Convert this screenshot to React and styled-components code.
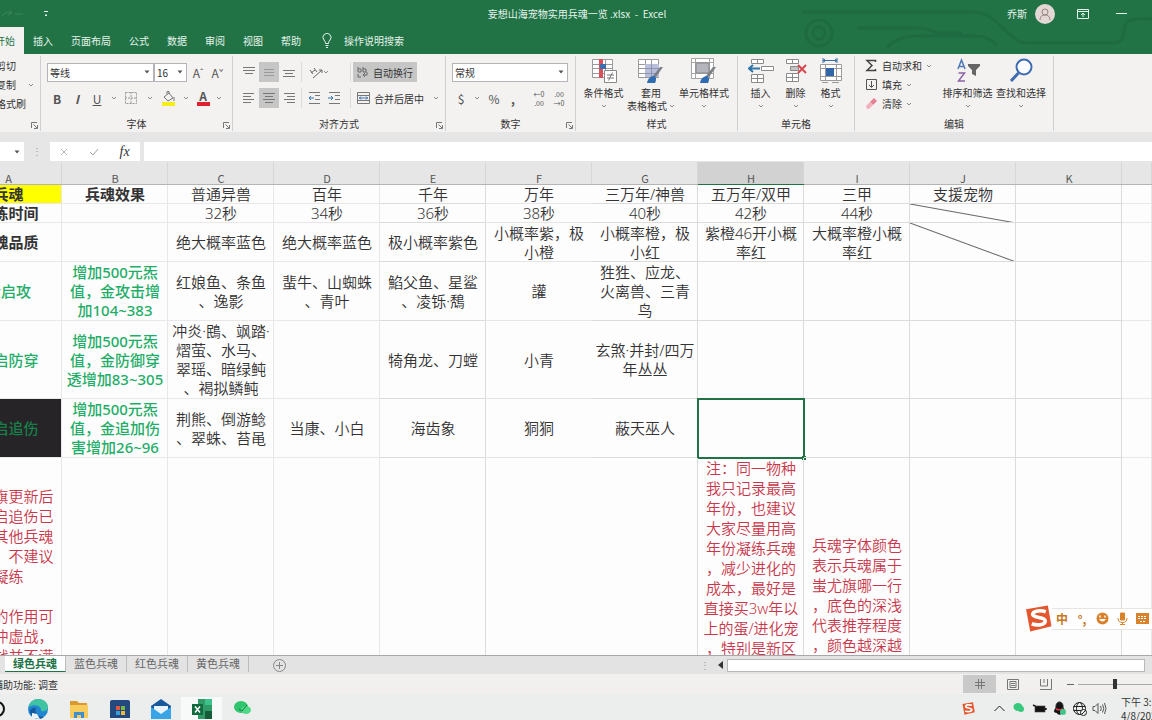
import React, { useState } from "react";
import styled, { createGlobalStyle, css } from "styled-components";

const COLUMNS = ["A", "B", "C", "D", "E", "F", "G", "H", "I", "J", "K", "L"];
const TABS = ["开始", "插入", "页面布局", "公式", "数据", "审阅", "视图", "帮助"];
const SHEETS = ["绿色兵魂", "蓝色兵魂", "红色兵魂", "黄色兵魂"];

// each cell is a list of lines, or an object with lines and a look
const ROWS = [
  {
    height: 19,
    cells: {
      A: { lines: ["兵魂"], bold: true, fill: "#ffff00" },
      B: { lines: ["兵魂效果"], bold: true },
      C: ["普通异兽"],
      D: ["百年"],
      E: ["千年"],
      F: ["万年"],
      G: ["三万年/神兽"],
      H: ["五万年/双甲"],
      I: ["三甲"],
      J: ["支援宠物"],
    },
  },
  {
    height: 19,
    cells: {
      A: { lines: ["凝练时间"], bold: true },
      C: ["32秒"],
      D: ["34秒"],
      E: ["36秒"],
      F: ["38秒"],
      G: ["40秒"],
      H: ["42秒"],
      I: ["44秒"],
      J: { lines: [], slash: true },
    },
  },
  {
    height: 39,
    cells: {
      A: { lines: ["兵魂品质"], bold: true },
      C: ["绝大概率蓝色"],
      D: ["绝大概率蓝色"],
      E: ["极小概率紫色"],
      F: ["小概率紫，极", "小橙"],
      G: ["小概率橙，极", "小红"],
      H: ["紫橙46开小概", "率红"],
      I: ["大概率橙小概", "率红"],
      J: { lines: [], slash: true },
    },
  },
  {
    height: 59,
    cells: {
      A: { lines: ["金启攻"], color: "#1fae68", medium: true },
      B: { lines: ["增加500元炁", "值，金攻击增", "加104~383"], color: "#1fae68", medium: true },
      C: ["红娘鱼、条鱼", "、逸影"],
      D: ["蜚牛、山蜘蛛", "、青叶"],
      E: ["䱤父鱼、星鲨", "、凌铄·鵚"],
      F: ["讙"],
      G: ["狌狌、应龙、", "火离兽、三青", "鸟"],
    },
  },
  {
    height: 78,
    cells: {
      A: { lines: ["金启防穿"], color: "#1fae68", medium: true },
      B: { lines: ["增加500元炁", "值，金防御穿", "透增加83~305"], color: "#1fae68", medium: true },
      C: ["冲炎·鴖、飒踏·", "熠萤、水马、", "翠瑶、暗绿鲀", "、褐拟鳞鲀"],
      E: ["犄角龙、刀螳"],
      F: ["小青"],
      G: ["玄煞·并封/四万", "年丛丛"],
    },
  },
  {
    height: 59,
    cells: {
      A: { lines: ["金启追伤"], color: "#17804a", medium: true, fill: "#262427" },
      B: { lines: ["增加500元炁", "值，金追加伤", "害增加26~96"], color: "#1fae68", medium: true },
      C: ["荆熊、倒游鲶", "、翠蛛、苔黾"],
      D: ["当康、小白"],
      E: ["海齿象"],
      F: ["狪狪"],
      G: ["蔽天巫人"],
      H: { lines: [], selected: true },
    },
  },
  {
    height: 420,
    cells: {
      A: {
        note: 28,
        lines: ["蚩尤旗更新后", "，金启追伤已", "不如其他兵魂", "强了，不建议", "凝练", "\u00a0", "兵魂的作用可", "用于冲虚战，", "但实战并不满"],
      },
      H: {
        note: 0,
        lines: ["注：同一物种", "我只记录最高", "年份，也建议", "大家尽量用高", "年份凝练兵魂", "，减少进化的", "成本，最好是", "直接买3w年以", "上的蛋/进化宠", "，特别是新区"],
      },
      I: {
        note: 77,
        lines: ["兵魂字体颜色", "表示兵魂属于", "蚩尤旗哪一行", "，底色的深浅", "代表推荐程度", "，颜色越深越"],
      },
    },
  },
];

const Caret = ({ solid }) => (
  <svg width="6" height="4" viewBox="0 0 6 4" aria-hidden="true">
    {solid ? <path d="M0.5 0.5h5L3 3.5z" fill="#555" /> : <path d="M1 1l2 2 2-2" fill="none" stroke="#8a8a8a" />}
  </svg>
);

const LinesIcon = ({ at, color = "#777" }) => (
  <svg width="14" height="12" viewBox="0 0 14 12" aria-hidden="true">
    {at.map(([x, y, w]) => (
      <path key={y} d={`M${x} ${y}.5h${w}`} stroke={color} />
    ))}
  </svg>
);

const LauncherIcon = () => (
  <svg width="7" height="7" viewBox="0 0 7 7" fill="none" stroke="#777" aria-hidden="true">
    <path d="M0.5 6V0.5H6M2.5 2.5L6 6M6.5 3v3.5H3" />
  </svg>
);

const BrushShape = () => (
  <>
    <path d="M26 9l-7 10-3-1 7-9z" fill="#7c7f86" />
    <path d="M10 25c1-5 4-7 7-7 3 1 2 5 1 7z" fill="#2f6bb0" />
  </>
);

const GridShape = () => (
  <path d="M1.5 1.5h20v18h-20zM1.5 6.5h20M1.5 10.5h20M1.5 15.5h20M8.5 1.5v18M14.5 1.5v18" fill="#fff" stroke="#9a9a9a" />
);

const ConditionalIcon = () => (
  <svg width="26" height="26" viewBox="0 0 26 26" aria-hidden="true">
    <GridShape />
    <path d="M8 1h4v19H8z" fill="#d9505c" />
    <path d="M9 6h6v5H9z" fill="#3c6fb2" />
    <path d="M13.5 12.5h12v12h-12z" fill="#fff" stroke="#888" />
    <path d="M16 17h7M16 20h7M21.5 14.5l-4 8" stroke="#777" />
  </svg>
);

const TableFormatIcon = () => (
  <svg width="28" height="26" viewBox="0 0 28 26" aria-hidden="true">
    <GridShape />
    <path d="M8 6h14v13H8z" fill="#b9bfd8" />
    <path d="M8 10.5h14M8 15.5h14M14.5 6v13" stroke="#8c93b3" />
    <BrushShape />
  </svg>
);

const CellStyleIcon = () => (
  <svg width="28" height="26" viewBox="0 0 28 26" aria-hidden="true">
    <path d="M1.5 0.5h22v20h-22zM1.5 4.5h22M1.5 15.5h22M5.5 0.5v20M19.5 0.5v20" fill="#fff" stroke="#a5a5a5" />
    <path d="M6 5h13v10H6z" fill="#b5b5bd" stroke="#888" />
    <BrushShape />
  </svg>
);

const InsertIcon = () => (
  <svg width="26" height="26" viewBox="0 0 26 26" fill="#fff" stroke="#8a8a8a" aria-hidden="true">
    <path d="M3.5 1.5h12v4h-12zM9.5 1.5v4M3.5 16.5h12v8h-12zM9.5 16.5v8M3.5 20.5h12M13.5 8.5h12v4h-12z" />
    <path d="M1 10.5h11M5 7l-4 3.5 4 3.5" fill="none" stroke="#2f75a8" strokeWidth="2" />
  </svg>
);

const DeleteIcon = () => (
  <svg width="26" height="26" viewBox="0 0 26 26" fill="#fff" stroke="#8a8a8a" aria-hidden="true">
    <path d="M3.5 1.5h12v4h-12zM9.5 1.5v4M3.5 15.5h12v8h-12zM9.5 15.5v8M3.5 19.5h12" />
    <path d="M7.5 8.5h8v4h-8z" fill="#c4c4c4" />
    <path d="M15 7l8 8M23 7l-8 8" stroke="#d8454c" strokeWidth="2" />
  </svg>
);

const FormatIcon = () => (
  <svg width="26" height="26" viewBox="0 0 26 26" fill="#fff" stroke="#9a9a9a" aria-hidden="true">
    <path d="M2.5 6.5h21v16h-21zM2.5 10.5h21M2.5 18.5h21M7.5 6.5v16M18.5 6.5v16" />
    <path d="M8 10h8v8H8z" fill="#2f66a8" stroke="none" />
    <path d="M5 2.5h14M5 0v5M19 0v5M7 1L5 2.5 7 4M17 1l2 1.5L17 4" fill="none" stroke="#3b6ea5" />
    <path d="M4 24.5h6M14 24.5h7" />
  </svg>
);

const SortIcon = () => (
  <svg width="26" height="26" viewBox="0 0 26 26" fill="none" aria-hidden="true">
    <path d="M3 11L6.5 2 10 11M4 8.5h5" stroke="#4d7ab8" strokeWidth="1.5" />
    <path d="M3.5 15h6l-6 8h6.5" stroke="#8a63a8" strokeWidth="1.5" />
    <path d="M13 6h12v2l-4 4v6l-4-2v-4l-4-4z" fill="#666" />
  </svg>
);

const FindIcon = () => (
  <svg width="26" height="26" viewBox="0 0 26 26" fill="none" stroke="#3f6cb0" aria-hidden="true">
    <circle cx="16" cy="9" r="7.5" strokeWidth="2" fill="#fbfcff" />
    <path d="M10.5 15L3 23" strokeWidth="3" />
  </svg>
);

const ListIcon = ({ kind }) => (
  <svg width="13" height="13" viewBox="0 0 13 13" fill="none" aria-hidden="true">
    {kind === "cut" && <path d="M3 1l6 8M10 1L4 9M2 11a2 2 0 1 0 2-2M11 11a2 2 0 1 1-2-2" stroke="#555" />}
    {kind === "copy" && <path d="M1.5 1.5h6v8h-6zM4.5 3.5h6v8h-6z" fill="#fff" stroke="#555" />}
    {kind === "painter" && <path d="M2 9l5-6 4 3-5 6z" fill="#e2a85a" />}
    {kind === "sum" && <path d="M10.500 3V1.5H2L7 6.5 2 11.5h8.500V10" stroke="#444" strokeWidth="1.5" />}
    {kind === "fill" && <path d="M1.5 1.5h10v10h-10zM6.5 3v6M4 7l2.5 2.5L9 7" stroke="#555" />}
    {kind === "clear" && (
      <>
        <path d="M5 5l4-4 3 3-4 4z" fill="#e77f92" />
        <path d="M1 9l4-4 3 3-4 4H2z" fill="#f3b0bd" />
      </>
    )}
  </svg>
);

const SogouLogo = ({ size }) => (
  <svg width={size} height={size} viewBox="0 0 26 26" aria-label="搜狗">
    <path d="M1 4L22 0.5l3.5 20L5 25.5z" fill="#e4572e" />
    <path d="M20 6.5C14 4.5 6.5 6 7.5 9.5c1 3.5 12 1.5 12 6 0 4-8 4.5-13 2.5" fill="none" stroke="#fff" strokeWidth="3.5" />
  </svg>
);

const AppIcon = ({ kind }) => (
  <svg width="22" height="22" viewBox="0 0 22 22" aria-hidden="true">
    {kind === "edge" && (
      <>
        <circle cx="11" cy="11" r="10" fill="#1f86cf" />
        <path d="M1.5 9C3 3 8 1 12 1c5 0 9 4 9 8 0 3-3 5-7 4 1-5-6-8-12.5-4z" fill="#3fc3a0" />
        <path d="M9 10c-2 5 2 9 8 9-5 4-13 1-14-5 0-3 3-5 6-4z" fill="#155a9c" />
        <path d="M5 15l5 1 3 5-8-1z" fill="#eef3f7" />
      </>
    )}
    {kind === "folder" && (
      <>
        <path d="M2 3h7l2 2h8v4H2z" fill="#d99a2b" />
        <path d="M2 7h18v13H2z" fill="#f7cb5c" />
        <path d="M6 20v-6h10v6h-3v-3H9v3z" fill="#3f8fd0" />
      </>
    )}
    {kind === "store" && (
      <>
        <path d="M1 4q0-2 2-2h16q2 0 2 2v16H1z" fill="#24497e" />
        <path d="M7 8h4v4H7z" fill="#e5533d" />
        <path d="M12 8h4v4h-4z" fill="#77b943" />
        <path d="M7 13h4v4H7z" fill="#35a0dc" />
        <path d="M12 13h4v4h-4z" fill="#f5b82e" />
      </>
    )}
    {kind === "mail" && (
      <>
        <path d="M1 8l10-7 10 7v13H1z" fill="#17599c" />
        <path d="M4 8h14v8H4z" fill="#eaf4fc" />
        <path d="M1 9l10 7 10-7v12H1z" fill="#39a4e6" />
      </>
    )}
    {kind === "excel" && (
      <>
        <path d="M7 1h14v20H7z" fill="#2f9b66" />
        <path d="M14 1h7v6h-7z" fill="#3cc28a" />
        <path d="M14 13h7v8h-7z" fill="#155c39" />
        <path d="M1 6h11v11H1z" fill="#116b3e" />
        <path d="M4 8.5l5 6M9 8.5l-5 6" stroke="#fff" strokeWidth="1.5" />
      </>
    )}
    {kind === "wechat" && (
      <>
        <ellipse cx="9" cy="9" rx="7" ry="6" fill="#2fc56c" />
        <ellipse cx="14" cy="12" rx="5" ry="4" fill="#4fd987" />
        <path d="M7 11l3 2 5-6" stroke="#187a42" fill="none" />
      </>
    )}
  </svg>
);

const TrayIcon = ({ kind }) => (
  <svg width="15" height="15" viewBox="0 0 15 15" fill="none" stroke="#222" aria-hidden="true">
    {kind === "up" && <path d="M2.5 10l5-5 5 5" />}
    {kind === "wechat" && (
      <g stroke="none" fill="#36c97c">
        <ellipse cx="6" cy="6" rx="4.5" ry="4" />
        <ellipse cx="9" cy="8" rx="3" ry="3" />
      </g>
    )}
    {kind === "battery" && <path d="M1 4l3 1.5M3.5 5.5h9v5h-9zM14 7v2" fill="#111" strokeWidth="1.5" />}
    {kind === "qq" && (
      <>
        <path d="M4 7c-1-8 8-8 7 0 3 4 1 5 0 4-2 3-5 3-7 0-1 1-3 0 0-4z" fill="#151515" />
        <path d="M4 7q3.5 2 7 0v2q-3.5 1-7 0z" fill="#d93545" stroke="none" />
        <circle cx="11" cy="11" r="3" fill="#42c98a" stroke="none" />
      </>
    )}
    {kind === "globe" && (
      <>
        <circle cx="7.5" cy="7.5" r="6" />
        <ellipse cx="7.5" cy="7.5" rx="3" ry="6" />
        <path d="M1.5 5.5h12M1.5 9.5h12" />
        <circle cx="11.5" cy="11.5" r="3" fill="#eee" />
        <path d="M9.5 13.5l4-4" />
      </>
    )}
    {kind === "volume" && <path d="M1 5.5h2l3-3v10l-3-3H1zM8.5 5q1.5 2.5 0 5M10.5 3.5q2.5 4 0 8M12.5 2q3 5.5 0 11" stroke="#555" />}
  </svg>
);

function SheetCell({ data, column }) {
  const cell = Array.isArray(data) ? { lines: data } : data || { lines: [] };
  return (
    <Cell
      $strong={"EGHIJK".includes(column)}
      $plain={column === "F"}
      $bold={cell.bold}
      $medium={cell.medium}
      $color={cell.color}
      $fill={cell.fill}
      $slash={cell.slash}
      $selected={cell.selected}
      $note={cell.note}
    >
      {cell.lines.map((line, i) => (
        <div key={i}>{line}</div>
      ))}
    </Cell>
  );
}

function RibbonButton({ icon, label, width }) {
  return (
    <BigButton $width={width}>
      {icon}
      <span>{label}</span>
      <Caret />
    </BigButton>
  );
}

function TitleBar() {
  return (
    <TitleRow>
      <QuickAccess>
        <svg width="24" height="12" viewBox="0 0 24 12" fill="none" stroke="#3c8560" aria-hidden="true">
          <path d="M1 8q4-5 9-3M8 2l3 3-4 2M14 6h8" />
        </svg>
        <svg width="6" height="8" viewBox="0 0 6 8" aria-hidden="true">
          <path d="M1 1.5h4M2 5h2L3 6z" fill="#e4f3ea" stroke="#e4f3ea" />
        </svg>
      </QuickAccess>
      <Title>妄想山海宠物实用兵魂一览 .xlsx&nbsp; -&nbsp; Excel</Title>
      <Account>
        <span>乔斯</span>
        <Avatar aria-label="账户">
          <svg width="14" height="14" viewBox="0 0 14 14" fill="none" stroke="#9a8583" aria-hidden="true">
            <circle cx="7" cy="5" r="3" />
            <path d="M2 13q0-5 5-5t5 5" />
          </svg>
        </Avatar>
        <WindowButton aria-label="功能区显示选项">
          <svg width="12" height="10" viewBox="0 0 12 10" fill="none" stroke="#e6f3ec">
            <path d="M0.5 0.5h11v9H0.5zM0.5 2.5h11M6 8V4M4 6l2-2 2 2" />
          </svg>
        </WindowButton>
        <WindowButton aria-label="最小化">
          <svg width="11" height="10" viewBox="0 0 11 10" stroke="#e6f3ec">
            <path d="M0 4.5h11" />
          </svg>
        </WindowButton>
      </Account>
    </TitleRow>
  );
}

function FontGroup() {
  return (
    <Group $width={192}>
      <Tools>
        <Row>
          <Field $width={107}>
            <select aria-label="字体" defaultValue="等线"><option>等线</option></select>
            <Caret solid />
          </Field>
          <Field $width={33}>
            <select aria-label="字号" defaultValue="16"><option>16</option></select>
            <Caret solid />
          </Field>
          <Tool $width={22} aria-label="增大字号">A<sup>ˆ</sup></Tool>
          <Tool $width={17} aria-label="减小字号">A<sup>ˇ</sup></Tool>
        </Row>
        <Row>
          <Tool $width={20} aria-label="加粗"><b>B</b></Tool>
          <Tool $width={20} aria-label="倾斜"><b><i>I</i></b></Tool>
          <Tool $width={20} aria-label="下划线"><u>U</u></Tool>
          <Tool $width={14} aria-label="下划线选项"><Caret /></Tool>
          <Tool $width={20} aria-label="边框">
            <svg width="12" height="12" viewBox="0 0 12 12" fill="none" stroke="#999"><path d="M0.5 0.5h11v11H0.5zM6 0v12M0 6h12" strokeDasharray="2 1" /></svg>
          </Tool>
          <Tool $width={18} aria-label="边框选项"><Caret /></Tool>
          <Tool $width={20} aria-label="填充颜色">
            <svg width="14" height="15" viewBox="0 0 14 15" fill="none"><path d="M2 6l5-4 4 5-5 3zM5 3V0.5h2V3M12 6v4" stroke="#777" /><path d="M0 11h13v4H0z" fill="#f8ee17" /></svg>
          </Tool>
          <Tool $width={14} aria-label="填充颜色选项"><Caret /></Tool>
          <Tool $width={20} aria-label="字体颜色">
            <FontColour>A</FontColour>
          </Tool>
          <Tool $width={12} aria-label="字体颜色选项"><Caret /></Tool>
        </Row>
      </Tools>
      <GroupLabel>字体<LauncherIcon /></GroupLabel>
    </Group>
  );
}

function AlignmentGroup() {
  return (
    <Group $width={213}>
      <Tools>
        <Row>
          <Tool $width={20} aria-label="顶端对齐"><LinesIcon at={[[1, 1, 12], [1, 4, 12], [3, 7, 8]]} /></Tool>
          <Tool $width={20} $on aria-label="垂直居中"><LinesIcon at={[[2, 3, 10], [2, 6, 10], [2, 9, 10]]} color="#999" /></Tool>
          <Tool $width={20} aria-label="底端对齐"><LinesIcon at={[[1, 4, 12], [3, 7, 8], [1, 10, 12]]} /></Tool>
          <Divider />
          <Tool $width={30} aria-label="方向">
            <svg width="14" height="13" viewBox="0 0 14 13" fill="none" stroke="#666"><path d="M4 12l9-8M10 4h3v3M1 4l3 4M5 2l3 4M2 7l4-3" /></svg>
            <Caret />
          </Tool>
          <Spacer />
          <Divider />
          <LabelSlot>
            <LabelButton $on>
              <svg width="12" height="12" viewBox="0 0 12 12" fill="none" stroke="#666" aria-hidden="true"><path d="M1 1v5h3V3H1M6 1v5h3V3H6M1 8v3h3M10 6v3H6l2-2M6 9l2 2" /></svg>
              自动换行
            </LabelButton>
          </LabelSlot>
        </Row>
        <Row>
          <Tool $width={20} aria-label="左对齐"><LinesIcon at={[[1, 1, 11], [1, 4, 8], [1, 7, 11], [1, 10, 8]]} /></Tool>
          <Tool $width={20} $on aria-label="居中"><LinesIcon at={[[1, 1, 12], [3, 4, 8], [1, 7, 12], [3, 10, 8]]} /></Tool>
          <Tool $width={20} aria-label="右对齐"><LinesIcon at={[[2, 1, 11], [5, 4, 8], [2, 7, 11], [5, 10, 8]]} /></Tool>
          <Divider />
          <Tool $width={20} aria-label="减少缩进量">
            <svg width="12" height="12" viewBox="0 0 12 12" fill="none" stroke="#777"><path d="M1 0.5h11M7 3.5h5M7 7.5h5M1 11.5h11" /><path d="M6 6H1M3 4L1 6l2 2" stroke="#2e77b0" /></svg>
          </Tool>
          <Tool $width={20} aria-label="增加缩进量">
            <svg width="12" height="12" viewBox="0 0 12 12" fill="none" stroke="#777"><path d="M1 0.5h11M7 3.5h5M7 7.5h5M1 11.5h11" /><path d="M0 6h5M3 4l2 2-2 2" stroke="#2e77b0" /></svg>
          </Tool>
          <Spacer />
          <Divider />
          <LabelSlot>
            <LabelButton>
              <svg width="13" height="12" viewBox="0 0 13 12" fill="none" stroke="#777" aria-hidden="true"><path d="M0.5 0.5h12v11H0.5zM0.5 3.5h12M0.5 8.5h12" /><path d="M2 6h9M4 4.5L2.5 6 4 7.5M9 4.5L10.5 6 9 7.5" stroke="#3c6db0" /></svg>
              合并后居中
            </LabelButton>
            <Caret />
          </LabelSlot>
        </Row>
      </Tools>
      <GroupLabel>对齐方式<LauncherIcon /></GroupLabel>
    </Group>
  );
}

function NumberGroup() {
  return (
    <Group $width={130}>
      <Tools>
        <Row>
          <Field $width={116}>
            <select aria-label="数字格式" defaultValue="常规"><option>常规</option></select>
            <Caret solid />
          </Field>
        </Row>
        <Row>
          <Tool $width={18} aria-label="会计数字格式">$</Tool>
          <Tool $width={14} aria-label="货币选项"><Caret /></Tool>
          <Tool $width={20} aria-label="百分比样式">%</Tool>
          <Tool $width={18} aria-label="千位分隔样式"><b>,</b></Tool>
          <Spacer />
          <Tool $width={20} aria-label="增加小数位数"><Decimals><span>←0</span><span>.00</span></Decimals></Tool>
          <Tool $width={20} aria-label="减少小数位数"><Decimals><span>.00</span><span>→0</span></Decimals></Tool>
        </Row>
      </Tools>
      <GroupLabel>数字<LauncherIcon /></GroupLabel>
    </Group>
  );
}

function StatusRow() {
  return (
    <StatusBar>
      <span>辅助功能: 调查</span>
      <Spacer />
      <ViewButton $on aria-label="普通">
        <svg width="10" height="10" viewBox="0 0 10 10" fill="none" stroke="#777"><path d="M0 3.5h10M0 6.5h10M3.5 0v10M6.5 0v10" /></svg>
      </ViewButton>
      <ViewButton aria-label="页面布局">
        <svg width="12" height="11" viewBox="0 0 12 11" fill="none" stroke="#777"><path d="M0.5 0.5h11v10H0.5zM3 2.5h6v6H3zM4 4.5h4M4 6.5h4" /></svg>
      </ViewButton>
      <ViewButton aria-label="分页预览">
        <svg width="12" height="11" viewBox="0 0 12 11" fill="none" stroke="#777"><path d="M0.5 0v7h7V0M4 0v4M11.5 0v10.5H0" /></svg>
      </ViewButton>
      <Zoom>
        <svg width="7" height="3" viewBox="0 0 7 3" stroke="#666" aria-hidden="true"><path d="M0 1.5h7" /></svg>
        <input type="range" aria-label="显示比例" min="0" max="100" defaultValue="50" />
      </Zoom>
    </StatusBar>
  );
}

function App() {
  const [tab, setTab] = useState("开始");
  const [sheet, setSheet] = useState("绿色兵魂");

  return (
    <Viewport>
      <GlobalStyle />
      <Shell>
        <Header>
          <Circuit viewBox="0 0 360 54" aria-hidden="true">
            <path d="M10 12h170q14 0 22 8l20 18q6 5 14 5h84q12 0 12-12t14-12h22" />
            <path d="M65 28h60q12 0 20 5h25M95 48q10-12 30-12h60q12 0 20 10" />
            <circle cx="27" cy="33" r="13" />
            <circle cx="27" cy="33" r="6" />
          </Circuit>
          <TitleBar />
          <Tabs>
            {TABS.map((name) => (
              <Tab key={name} $active={name === tab} onClick={() => setTab(name)}>
                {name}
              </Tab>
            ))}
            <TellMe>
              <svg width="10" height="15" viewBox="0 0 10 15" fill="none" stroke="#e6f3ec" aria-hidden="true">
                <path d="M3.5 10.5Q3.5 8.5 2 7a4 4 0 1 1 6 0Q6.5 8.5 6.5 10.5zM3.5 12.5h3M4 14.5h2" />
              </svg>
              操作说明搜索
            </TellMe>
          </Tabs>
        </Header>

        <Ribbon>
          <Group $width={86}>
            <List $left={24}>
              <ListButton><ListIcon kind="cut" />剪切</ListButton>
              <ListButton><ListIcon kind="copy" />复制<Gap /><Caret /></ListButton>
              <ListButton><ListIcon kind="painter" />格式刷</ListButton>
            </List>
            <GroupLabel><LauncherIcon /></GroupLabel>
          </Group>
          <FontGroup />
          <AlignmentGroup />
          <NumberGroup />
          <Group $width={162}>
            <BigRow>
              <RibbonButton width={45} icon={<ConditionalIcon />} label="条件格式" />
              <BigButton $width={50}>
                <TableFormatIcon />
                <span>套用</span>
                <SecondLine>表格格式<Caret /></SecondLine>
              </BigButton>
              <RibbonButton width={56} icon={<CellStyleIcon />} label="单元格样式" />
            </BigRow>
            <GroupLabel>样式</GroupLabel>
          </Group>
          <Group $width={117}>
            <BigRow>
              <RibbonButton width={35} icon={<InsertIcon />} label="插入" />
              <RibbonButton width={35} icon={<DeleteIcon />} label="删除" />
              <RibbonButton width={35} icon={<FormatIcon />} label="格式" />
            </BigRow>
            <GroupLabel>单元格</GroupLabel>
          </Group>
          <Group $width={199}>
            <Split>
              <List $left={10}>
                <ListButton><ListIcon kind="sum" />自动求和<Caret /></ListButton>
                <ListButton><ListIcon kind="fill" />填充<Caret /></ListButton>
                <ListButton><ListIcon kind="clear" />清除<Caret /></ListButton>
              </List>
              <BigRow>
                <RibbonButton width={53} icon={<SortIcon />} label="排序和筛选" />
                <RibbonButton width={54} icon={<FindIcon />} label="查找和选择" />
              </BigRow>
            </Split>
            <GroupLabel>编辑</GroupLabel>
          </Group>
        </Ribbon>

        <FormulaBar>
          <NameBox><Caret solid /></NameBox>
          <Dots>⋮</Dots>
          <FormulaTools>
            <button aria-label="取消"><svg width="8" height="8" viewBox="0 0 8 8" stroke="#b5b5b5"><path d="M1 1l6 6M7 1L1 7" /></svg></button>
            <button aria-label="输入"><svg width="10" height="8" viewBox="0 0 10 8" fill="none" stroke="#a5a5a5"><path d="M1 4l3 3 5-6" /></svg></button>
            <button aria-label="插入函数"><em>fx</em></button>
          </FormulaTools>
          <FormulaInput aria-label="编辑栏" />
        </FormulaBar>

        <SheetArea>
          <Sheet>
            <colgroup>
              {COLUMNS.map((c) => (
                <Col key={c} $name={c} />
              ))}
            </colgroup>
            <thead>
              <tr>
                {COLUMNS.map((c) => (
                  <ColumnHead key={c} scope="col" $selected={c === "H"}>{c === "L" ? "" : c}</ColumnHead>
                ))}
              </tr>
            </thead>
            <tbody>
              {ROWS.map((row, i) => (
                <SheetRow key={i} $height={row.height}>
                  {COLUMNS.map((c) => (
                    <SheetCell key={c} column={c} data={row.cells[c]} />
                  ))}
                </SheetRow>
              ))}
            </tbody>
          </Sheet>
        </SheetArea>

        <SheetBar>
          {SHEETS.map((name) => (
            <SheetTab key={name} $active={name === sheet} onClick={() => setSheet(name)}>
              {name}
            </SheetTab>
          ))}
          <AddSheet aria-label="新工作表">
            <svg width="13" height="13" viewBox="0 0 13 13" fill="none" stroke="#888"><circle cx="6.5" cy="6.5" r="6" /><path d="M6.5 3v7M3 6.5h7" /></svg>
          </AddSheet>
          <Scroll>
            <Dots>⋮</Dots>
            <svg width="5" height="8" viewBox="0 0 5 8" aria-hidden="true"><path d="M5 0v8L0 4z" fill="#333" /></svg>
            <Thumb />
          </Scroll>
        </SheetBar>

        <StatusRow />

        <Taskbar>
          <Cortana aria-label="Cortana" />
          {["edge", "folder", "store", "mail", "excel", "wechat"].map((kind) => (
            <TaskButton key={kind} aria-label={kind} $active={kind === "excel"}>
              <AppIcon kind={kind} />
            </TaskButton>
          ))}
          <Spacer />
          <Tray>
            <TrayLead><SogouLogo size={13} /></TrayLead>
            {["up", "wechat", "battery", "qq", "globe", "volume"].map((kind) => (
              <TrayIcon key={kind} kind={kind} />
            ))}
          </Tray>
          <Clock>
            下午 3:25
            <br />
            4/8/2021
          </Clock>
        </Taskbar>
      </Shell>

      <Ime>
        <SogouLogo size={27} />
        <ImeBar>
          <button>中</button>
          <button>°,</button>
          <button aria-label="表情">
            <svg width="13" height="13" viewBox="0 0 13 13">
              <circle cx="6.5" cy="6.5" r="6" fill="#d9822b" />
              <path d="M3 7q3.5 5 7 0z" fill="#fff" />
              <path d="M4 3.5v2M9 3.5v2" stroke="#fff" strokeWidth="1.5" />
            </svg>
          </button>
          <button aria-label="语音">
            <svg width="11" height="13" viewBox="0 0 11 13" fill="none" stroke="#d9822b">
              <path d="M3.5 1h4v7h-4z" fill="#d9822b" />
              <path d="M1 6q0 4.5 4.5 4.5T10 6M5.5 10v2M3 12.5h5" />
            </svg>
          </button>
          <button aria-label="软键盘">
            <svg width="13" height="11" viewBox="0 0 13 11">
              <path d="M0 0h13v11H0z" fill="#d9822b" />
              <path d="M2 3.5h9M2 5.5h9M4 8.5h5" stroke="#fff" strokeDasharray="2 1" />
            </svg>
          </button>
        </ImeBar>
      </Ime>
    </Viewport>
  );
}

export default App;

const GlobalStyle = createGlobalStyle`
  * {
    box-sizing: border-box;
  }

  body {
    margin: 0;
    font-family: "Noto Sans CJK SC", "Noto Sans", sans-serif;
    font-size: 10px;
    color: #333;
  }

  button,
  select,
  input {
    font: inherit;
    color: inherit;
  }

  button {
    display: flex;
    align-items: center;
    justify-content: center;
    padding: 0;
    border: 0;
    background: none;
    white-space: nowrap;
    cursor: pointer;
  }

  svg {
    flex: none;
  }
`;

const Viewport = styled.div`
  height: 100vh;
  overflow: hidden;
`;

// the window hangs over the left edge of the screen
const Shell = styled.div`
  display: flex;
  flex-direction: column;
  height: 100%;
  margin-left: -45px;
  background: #e6e6e6;
`;

const Header = styled.header`
  position: relative;
  background: #217346;
  color: #e6f3ec;
`;

const Circuit = styled.svg`
  position: absolute;
  top: 0;
  right: 0;
  width: 360px;
  height: 54px;
  fill: none;
  stroke: #1e6b41;
  stroke-width: 3;
`;

const TitleRow = styled.div`
  position: relative;
  display: flex;
  align-items: center;
  height: 27px;
`;

const QuickAccess = styled.div`
  display: flex;
  flex: 0 0 192px;
  align-items: center;
  gap: 18px;
  padding-left: 46px;
`;

const Title = styled.div`
  flex: 1;
  text-align: center;
`;

const Account = styled.div`
  display: flex;
  flex: 0 0 145px;
  align-items: center;
`;

const Avatar = styled.button`
  width: 20px;
  height: 20px;
  margin-left: 8px;
  border-radius: 50%;
  background: #e3d8d3;
`;

const WindowButton = styled.button`
  width: 39px;
  margin-left: 8px;

  & + & {
    margin-left: 0;
  }
`;

const Tabs = styled.nav`
  position: relative;
  display: flex;
  height: 27px;
  padding-left: 31px;
`;

const Tab = styled.button`
  padding: 0 9px;

  ${({ $active }) =>
    $active &&
    css`
      background: #f3f2f1;
      color: #217346;
    `}
`;

const TellMe = styled.button`
  gap: 12px;
  margin-left: 12px;
`;

const Ribbon = styled.div`
  display: flex;
  height: 78px;
  padding: 2px 0 1px;
  background: #f3f2f1;
`;

const Group = styled.section`
  display: flex;
  flex: 0 0 ${({ $width }) => $width}px;
  flex-direction: column;
  justify-content: space-between;
  min-width: 0;
  border-right: 1px solid #cfcfd2;
`;

const GroupLabel = styled.div`
  position: relative;
  height: 14px;
  line-height: 14px;
  text-align: center;

  svg {
    position: absolute;
    right: 2px;
    bottom: 2px;
  }
`;

const List = styled.div`
  display: flex;
  flex-direction: column;
  padding-left: ${({ $left }) => $left}px;
`;

const ListButton = styled.button`
  justify-content: flex-start;
  gap: 4px;
  height: 19px;
`;

const Gap = styled.span`
  width: 4px;
`;

const Spacer = styled.span`
  flex: 1;
`;

const Tools = styled.div`
  display: flex;
  flex-direction: column;
  gap: 6px;
  padding: 6px 6px 0;
`;

const Row = styled.div`
  display: flex;
  align-items: center;
  height: 20px;
`;

const Field = styled.label`
  display: flex;
  align-items: center;
  width: ${({ $width }) => $width}px;
  height: 19px;
  padding: 0 3px 0 2px;
  border: 1px solid #b4b4b8;
  background: #fff;

  select {
    flex: 1;
    min-width: 0;
    padding: 0;
    border: 0;
    background: none;
    appearance: none;
  }
`;

const Tool = styled.button`
  flex: none;
  width: ${({ $width }) => $width}px;
  height: 20px;
  background: ${({ $on }) => ($on ? "#c6c6c6" : "none")};
  color: #555;
  font-size: 12px;

  sup {
    font-size: 8px;
  }
`;

const FontColour = styled.span`
  width: 13px;
  border-bottom: 4px solid #e0202d;
  font-weight: 700;
  line-height: 12px;
`;

const Divider = styled.span`
  width: 1px;
  height: 20px;
  margin: 0 2px;
  background: #dcdcdc;
`;

const LabelSlot = styled.div`
  display: flex;
  flex: 0 0 86px;
  align-items: center;
  justify-content: space-between;
`;

const LabelButton = styled.button`
  gap: 4px;
  height: 20px;
  padding: 0 4px;
  background: ${({ $on }) => ($on ? "#c6c6c6" : "none")};
`;

const Decimals = styled.span`
  display: grid;
  gap: 1px;
  font-size: 7px;
  line-height: 8px;
`;

const Split = styled.div`
  display: flex;
  justify-content: space-between;
`;

const BigRow = styled.div`
  display: flex;
  padding: 2px 5px 0;
`;

const BigButton = styled.button`
  flex: 0 0 ${({ $width }) => $width}px;
  flex-direction: column;
  justify-content: flex-start;
  line-height: 13px;

  span {
    margin-top: 2px;
  }

  > svg:last-child {
    margin-top: 5px;
  }
`;

const SecondLine = styled.div`
  display: flex;
  align-items: center;
  gap: 2px;
`;

const FormulaBar = styled.div`
  display: flex;
  height: 30px;
  padding: 10px 0 1px;
`;

const NameBox = styled.div`
  display: flex;
  flex: 0 0 69px;
  align-items: center;
  justify-content: flex-end;
  padding-right: 4px;
  background: #fff;
`;

const Dots = styled.span`
  flex: 0 0 26px;
  color: #999;
  line-height: 18px;
  text-align: center;
`;

const FormulaTools = styled.div`
  display: flex;
  flex: 0 0 90px;
  justify-content: space-around;
  margin-right: 4px;
  background: #fff;

  em {
    font-family: "Liberation Serif", serif;
    font-size: 14px;
  }
`;

const FormulaInput = styled.input`
  flex: 1;
  min-width: 0;
  border: 0;
  background: #fff;
`;

const SheetArea = styled.main`
  flex: 1;
  min-height: 0;
  overflow: hidden;
  background: #fefdfe;
`;

const Sheet = styled.table`
  width: 100%;
  table-layout: fixed;
  border-spacing: 0;
  border-collapse: separate;
`;

const COLUMN_WIDTHS = { A: "107px", L: "auto" };

const Col = styled.col`
  width: ${({ $name }) => COLUMN_WIDTHS[$name] || "106px"};
`;

const ColumnHead = styled.th`
  height: 23px;
  padding: 9px 0 0;
  border-bottom: 1px solid ${({ $selected }) => ($selected ? "#217346" : "#b5b5b5")};
  background: ${({ $selected }) => ($selected ? "#d2d2d2" : "#e6e6e6")};
  box-shadow: inset -1px 0 #d6d6d6;
  color: #555;
  font-size: 11px;
  font-weight: 400;
  line-height: 12px;
`;

const SheetRow = styled.tr`
  height: ${({ $height }) => $height}px;
`;

const Cell = styled.td`
  position: relative;
  padding: 0;
  background: ${({ $fill }) => $fill || "none"};
  box-shadow: ${({ $strong, $plain }) =>
    $plain ? "inset 0 -1px #e6e6e6" : `inset -1px -1px ${$strong ? "#dcdcdc" : "#e9e7ea"}`};
  color: ${({ $color }) => $color || "#333"};
  font-family: "Noto Sans", "Noto Sans CJK SC", sans-serif;
  font-size: 15px;
  font-weight: ${({ $bold, $medium }) => ($bold ? 700 : $medium ? 500 : 350)};
  line-height: 19px;
  text-align: center;
  white-space: nowrap;

  ${({ $slash }) =>
    $slash &&
    css`
      background: linear-gradient(to top right, transparent calc(50% - 1px), #666 50%, transparent calc(50% + 1px));
    `}

  ${({ $note }) =>
    $note !== undefined &&
    css`
      padding-top: ${$note}px;
      color: #c8384a;
      line-height: 20px;
      vertical-align: top;
    `}

  ${({ $selected }) =>
    $selected &&
    css`
      outline: 2px solid #217346;
      outline-offset: -1px;

      &::after {
        content: "";
        position: absolute;
        right: -2px;
        bottom: -2px;
        width: 4px;
        height: 4px;
        background: #217346;
      }
    `}
`;

const SheetBar = styled.div`
  display: flex;
  height: 19px;
  padding-left: 50px;
  border-top: 1px solid #a8a8a8;
  background: #e3e3e3;
`;

const SheetTab = styled.button`
  width: 61px;
  height: 16px;
  padding-bottom: 2px;
  border-right: 1px solid #bdbdbd;
  color: #666;
  font-size: 11px;

  ${({ $active }) =>
    $active &&
    css`
      border-bottom: 1px solid #217346;
      background: #fff;
      color: #217346;
      font-weight: 700;
    `}
`;

const AddSheet = styled.button`
  width: 60px;
`;

const Scroll = styled.div`
  display: flex;
  flex: 0 0 460px;
  align-items: center;
  margin-left: auto;
`;

const Thumb = styled.div`
  flex: 1;
  height: 13px;
  margin: 0 7px 0 4px;
  border: 1px solid #b9b9b9;
  background: #fff;
`;

const StatusBar = styled.footer`
  display: flex;
  align-items: center;
  height: 20px;
  padding-left: 38px;
  background: #f1f0ef;
`;

const ViewButton = styled.button`
  width: 33px;
  height: 18px;
  background: ${({ $on }) => ($on ? "#c9c9c9" : "none")};
`;

const Zoom = styled.div`
  display: flex;
  flex: 0 0 90px;
  align-items: center;
  gap: 4px;
  min-width: 0;
  padding-left: 5px;

  input {
    flex: 1;
    min-width: 0;
    height: 10px;
    margin: 0;
    appearance: none;
    background: linear-gradient(#aaa, #aaa) center / 100% 1px no-repeat;
  }

  input::-webkit-slider-thumb {
    appearance: none;
    width: 4px;
    height: 10px;
    background: #333;
  }
`;

const Taskbar = styled.div`
  display: flex;
  align-items: center;
  height: 26px;
  padding: 3px 0 0 34px;
  background: #eceeed;
`;

const Cortana = styled.button`
  width: 16px;
  height: 16px;
  margin-right: 12px;
  border: 2px solid #111;
  border-radius: 50%;
`;

const TaskButton = styled.button`
  width: 41px;
  height: 23px;
  background: ${({ $active }) => ($active ? "#f8faf9" : "none")};
`;

const Tray = styled.div`
  display: flex;
  align-items: center;
  gap: 5px;
  margin-right: 14px;
`;

const TrayLead = styled.span`
  display: flex;
  margin-right: 12px;
`;

const Clock = styled.div`
  flex: 0 0 31px;
  min-width: 0;
  line-height: 14px;
  white-space: nowrap;
`;

const Ime = styled.div`
  position: fixed;
  right: 0;
  bottom: 88px;
  display: flex;
  align-items: center;
`;

const ImeBar = styled.div`
  display: grid;
  grid-template-columns: repeat(5, 20px);
  height: 22px;
  border: 1px solid #e8e4e2;
  border-width: 1px 0;
  background: #fff;
  color: #c9781f;
  font-size: 12px;
  font-weight: 700;
`;
